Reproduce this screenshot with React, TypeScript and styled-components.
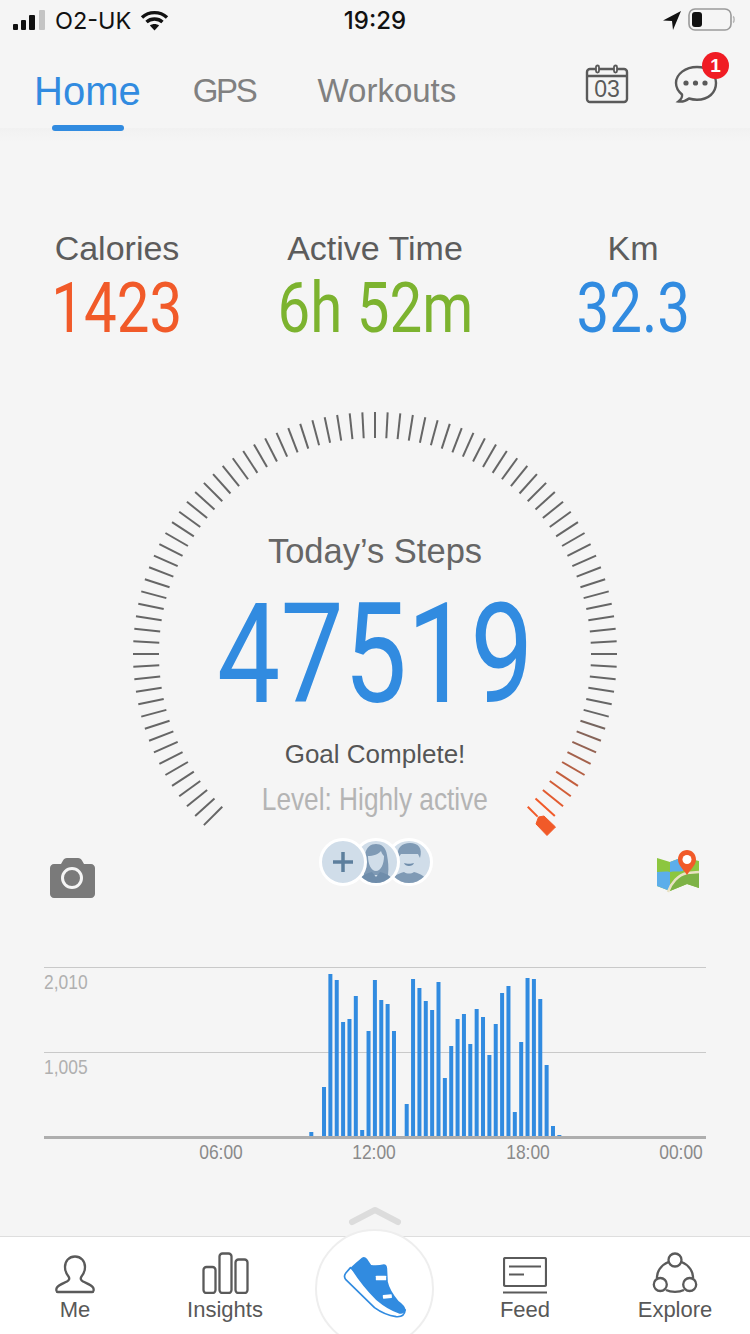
import React from "react";
import styled, { createGlobalStyle } from "styled-components";

const BLUE = "#318be0";
const ORANGE = "#f15a29";
const SANS = `"Liberation Sans", Arial, sans-serif`;
const CONDENSED = `Roboto, "Liberation Sans", Arial, sans-serif`;

const BAR_HEIGHTS = [
  5, 0, 50, 163, 157, 115, 118, 141, 7, 106, 157, 137, 133, 106, 0, 33, 158, 149, 136, 127,
  155, 59, 91, 118, 123, 93, 128, 120, 82, 113, 144, 151, 25, 95, 159, 158, 138, 72, 11, 2,
];

const TICKS = 91;

const mix = (t: number) => {
  const from = [102, 102, 102];
  const to = [241, 90, 41];
  const c = from.map((v, i) => Math.round(v + (to[i] - v) * t));
  return `rgb(${c.join(",")})`;
};

const GlobalStyle = createGlobalStyle`
  html, body {
    margin: 0;
    padding: 0;
    background: #f5f5f5;
    font-family: ${SANS};
  }
`;

const Page = styled.div`
  width: 750px;
  height: 1334px;
  display: flex;
  flex-direction: column;
  overflow: hidden;
  background: #f5f5f5;
`;

const StatusBar = styled.div`
  height: 40px;
  display: grid;
  grid-template-columns: 1fr auto 1fr;
  align-items: center;
  padding: 0 13px;
  color: #111;
  font-family: Inter, sans-serif;
`;

const StatusLeft = styled.div`
  display: flex;
  align-items: center;
  gap: 9px;
  font-size: 23.5px;
`;

const StatusRight = styled.div`
  display: flex;
  align-items: center;
  justify-content: flex-end;
  gap: 7px;
  padding-right: 2px;
`;

const Clock = styled.div`
  font-size: 24px;
  font-weight: 500;
`;

const Header = styled.header`
  height: 88px;
  display: flex;
  align-items: flex-start;
  justify-content: space-between;
  padding: 0 32px 0 34px;
  box-sizing: border-box;
  position: relative;
`;

const Tabs = styled.nav`
  display: flex;
  align-items: flex-start;
`;

const Tab = styled.div<{ $active?: boolean; $tracking?: string }>`
  position: relative;
  font-size: ${(p) => (p.$active ? "40px" : "33px")};
  line-height: 50px;
  margin-top: 26px;
  margin-right: ${(p) => (p.$active ? "52px" : "62px")};
  letter-spacing: ${(p) => p.$tracking ?? "0"};
  color: ${(p) => (p.$active ? BLUE : "#808080")};

  ${(p) =>
    p.$active &&
    `
    &::after {
      content: "";
      position: absolute;
      left: 18px;
      top: 59px;
      width: 72px;
      height: 6px;
      border-radius: 3px;
      background: ${BLUE};
    }
  `}
`;

const HeaderIcons = styled.div`
  display: flex;
  align-items: flex-start;
  gap: 45px;
  margin-top: 24px;
`;

const BubbleWrap = styled.div`
  position: relative;
  width: 44px;
  height: 40px;
`;

const Badge = styled.div`
  position: absolute;
  top: -12px;
  right: -11px;
  width: 27px;
  height: 27px;
  border-radius: 50%;
  background: #f01c24;
  color: #fff;
  font-size: 19px;
  font-weight: 700;
  display: flex;
  align-items: center;
  justify-content: center;
`;

const Main = styled.main`
  flex: 1;
  padding-top: 100px;
  background: linear-gradient(180deg, #f1f1f1 0, #f5f5f5 14px);
`;

const Metrics = styled.section`
  display: grid;
  grid-template-columns: repeat(3, 200px);
  column-gap: 58px;
  padding-left: 17px;
`;

const Metric = styled.div`
  display: flex;
  flex-direction: column;
  align-items: center;
`;

const MetricLabel = styled.div`
  font-size: 34px;
  line-height: 40px;
  color: #5c5c5c;
  white-space: nowrap;
`;

const MetricValue = styled.div<{ $color: string }>`
  margin-top: 5px;
  font-family: ${CONDENSED};
  font-weight: 400;
  font-size: 71px;
  line-height: 70px;
  color: ${(p) => p.$color};
  white-space: nowrap;
  transform: scaleX(0.82);
`;

const Gauge = styled.section`
  position: relative;
  width: 500px;
  height: 434px;
  margin: 61px auto 0;
  padding-top: 127px;
  box-sizing: border-box;
  display: flex;
  flex-direction: column;
  align-items: center;
`;

const GaugeDial = styled.svg`
  position: absolute;
  left: 0;
  top: 0;
`;

const GaugeTitle = styled.div`
  font-size: 34.5px;
  line-height: 40px;
  color: #666;
`;

const Steps = styled.div`
  margin-top: 24px;
  font-family: ${CONDENSED};
  font-weight: 400;
  font-size: 139px;
  line-height: 120px;
  color: ${BLUE};
  transform: scaleX(0.81);
`;

const Goal = styled.div`
  margin-top: 22px;
  font-size: 26px;
  line-height: 34px;
  color: #555;
`;

const Level = styled.div`
  margin-top: 11px;
  font-size: 32px;
  line-height: 34px;
  color: #b4b4b4;
  white-space: nowrap;
  transform: scaleX(0.82);
`;

const Actions = styled.section`
  height: 59px;
  display: grid;
  grid-template-columns: 1fr auto 1fr;
  align-items: start;
  padding: 0 49px 0 50px;
`;

const CameraSlot = styled.div`
  padding-top: 20px;
`;

const MapSlot = styled.div`
  padding-top: 10px;
  display: flex;
  justify-content: flex-end;
`;

const Friends = styled.div`
  display: flex;
`;

const Friend = styled.div<{ $layer: number }>`
  position: relative;
  z-index: ${(p) => p.$layer};
  width: 48px;
  height: 48px;
  box-sizing: border-box;
  border: 3.5px solid #fff;
  border-radius: 50%;
  background: #d0dde9;
  overflow: hidden;
  display: flex;
  align-items: center;
  justify-content: center;

  & + & {
    margin-left: -15px;
  }
`;

const Chart = styled.section`
  position: relative;
  margin: 70px 44px 0;
`;

const Band = styled.div`
  height: 85px;
  border-top: 1px solid #c9c9c9;
  padding-top: 2px;
  box-sizing: border-box;
  font-size: 21px;
  line-height: 24px;
  color: #b0b0b0;
`;

const BandLabel = styled.div`
  transform: scaleX(0.83);
  transform-origin: left center;
`;

const Baseline = styled.div`
  position: relative;
  z-index: 1;
  margin-top: -1px;
  height: 3px;
  background: #aeaeae;
`;

const Bars = styled.svg`
  position: absolute;
  left: 0;
  top: 0;
`;

const TimeAxis = styled.div`
  display: flex;
  gap: 93.3px;
  padding-left: 191px;
  margin-top: 1px;
`;

const TimeLabel = styled.div`
  width: 60px;
  text-align: center;
  font-size: 21px;
  line-height: 24px;
  color: #8a8a8a;
  transform: scaleX(0.83);
`;

const BottomNav = styled.nav`
  position: relative;
  height: 98px;
  box-sizing: border-box;
  border-top: 1px solid #dedede;
  background: #fff;
  display: grid;
  grid-template-columns: repeat(5, 150px);
  padding-top: 14px;
`;

const NavItem = styled.div`
  display: flex;
  flex-direction: column;
  align-items: center;
`;

const NavIcon = styled.div`
  height: 43px;
  display: flex;
  align-items: flex-end;
`;

const NavLabel = styled.div`
  font-size: 22px;
  line-height: 32px;
  color: #585858;
`;

const Chevron = styled.svg`
  position: absolute;
  left: 348px;
  top: -31px;
`;

const RunButton = styled.div`
  position: absolute;
  left: 315px;
  top: -8px;
  width: 119px;
  height: 119px;
  box-sizing: border-box;
  border-radius: 50%;
  border: 2px solid #eeeeee;
  background: #fff;
  display: flex;
  align-items: flex-start;
  justify-content: center;
  padding-top: 24px;
`;

const SignalIcon = () => (
  <svg width="33" height="21" viewBox="0 0 33 21">
    <rect x="0" y="14" width="5" height="6" rx="1" fill="#111" />
    <rect x="8" y="10" width="5" height="10" rx="1" fill="#111" />
    <rect x="16" y="5" width="6" height="15" rx="1" fill="#111" />
    <rect x="26" y="0" width="6" height="20" rx="1" fill="#c4c4c4" />
  </svg>
);

const WifiIcon = () => (
  <svg width="29" height="21" viewBox="0 0 29 21" fill="none" stroke="#111" strokeWidth="3.4">
    <path d="M2 7.5C9 1 20 1 27 7.5" />
    <path d="M6.5 12C11 8 18 8 22.5 12" />
    <path d="M14.5 20.5l-4.6-5c2.6-2 6.6-2 9.2 0z" fill="#111" stroke="none" />
  </svg>
);

const LocationIcon = () => (
  <svg width="18" height="19" viewBox="0 0 18 19">
    <path d="M18 0L0 9.5l9 .5 1 9z" fill="#111" />
  </svg>
);

const BatteryIcon = () => (
  <svg width="47" height="24" viewBox="0 0 47 24" fill="none">
    <rect x="1" y="1" width="42" height="21" rx="6" stroke="#9a9a9a" strokeWidth="1.6" />
    <rect x="4" y="4" width="10" height="15" rx="3" fill="#111" />
    <path d="M45 8.5c1.5.6 1.5 5.4 0 6" stroke="#b5b5b5" strokeWidth="1.5" />
  </svg>
);

const CalendarIcon = () => (
  <svg width="44" height="40" viewBox="0 0 44 40" fill="none" stroke="#5a5a5a" strokeWidth="2.4">
    <rect x="2" y="5" width="40" height="33" rx="3" />
    <path d="M2 12h40" />
    <rect x="11" y="1.5" width="3" height="7" rx="1.5" fill="#f5f5f5" strokeWidth="1.8" />
    <rect x="29" y="1.5" width="3" height="7" rx="1.5" fill="#f5f5f5" strokeWidth="1.8" />
    <text x="22" y="33" textAnchor="middle" fontFamily={SANS} fontSize="23" fill="#5a5a5a" stroke="none">
      03
    </text>
  </svg>
);

const BubbleIcon = () => (
  <svg width="44" height="40" viewBox="0 0 44 40" fill="none">
    <path
      d="M23 3C11.5 3 2 10 2 19c0 4.5 2.5 8.5 6 11.5.5 2.5-1 5-3.5 7 4.5.5 8-1 10.5-3 2.500.8 5 1.200 8 1.200 11.500 0 19-7 19-16.700C42 10 34.500 3 23 3z"
      stroke="#5a5a5a"
      strokeWidth="2.4"
    />
    <circle cx="12" cy="19" r="2.6" fill="#5a5a5a" />
    <circle cx="21.5" cy="19" r="2.6" fill="#5a5a5a" />
    <circle cx="31" cy="19" r="2.6" fill="#5a5a5a" />
  </svg>
);

const Dial = () => {
  const cx = 250;
  const cy = 250;
  const lines = Array.from({ length: TICKS }, (_, i) => {
    const deg = -225 + i * 3;
    const a = (deg * Math.PI) / 180;
    const last = i === TICKS - 1;
    const outer = last ? 230 : 242;
    const t = Math.max(0, (i - (TICKS - 11)) / 9);
    return (
      <line
        key={i}
        x1={cx + 216 * Math.cos(a)}
        y1={cy + 216 * Math.sin(a)}
        x2={cx + outer * Math.cos(a)}
        y2={cy + outer * Math.sin(a)}
        stroke={last ? ORANGE : mix(t)}
        strokeWidth="2"
      />
    );
  });
  return (
    <GaugeDial width="500" height="440" viewBox="0 0 500 440">
      {lines}
      <path d="M411 420l2.5-7 5.5-1 11.5 11-8.500 8.500z" fill={ORANGE} stroke={ORANGE} strokeWidth="1" strokeLinejoin="round" />
    </GaugeDial>
  );
};

const CameraIcon = () => (
  <svg width="45" height="40" viewBox="0 0 45 40">
    <path
      d="M4 6h7l2-3.5C13.800 1 15 0 17 0h11c2 0 3.200 1 4 2.500L34 6h7c2.200 0 4 1.800 4 4v26c0 2.200-1.800 4-4 4H4c-2.200 0-4-1.800-4-4V10c0-2.200 1.800-4 4-4z"
      fill="#7a7a7a"
    />
    <circle cx="22" cy="20" r="9.5" fill="#7a7a7a" stroke="#f5f5f5" strokeWidth="3" />
  </svg>
);

const MapIcon = () => (
  <svg width="45" height="46" viewBox="0 0 45 46">
    <path d="M1 10l13 4 13-5 16 4v27l-12-4-17 7-13-5z" fill="#8cc63f" />
    <path d="M14 14l13-5v14c-4 1-9 0-13 1z" fill="#5caeea" />
    <path d="M1 24c4 0 9-1 13 0v19L1 38z" fill="#5caeea" />
    <path d="M14 43c2-8 9-14 15-17l14-1v15l-12-4z" fill="#7db246" />
    <path d="M12 44c3-9 10-17 19-19l12-1" fill="none" stroke="#e9e2c4" strokeWidth="2.5" />
    <path d="M31 27c-4-6-9-10-9-15.5C22 6 26 2 31 2s9 4 9 9.5C40 17 35 21 31 27z" fill={ORANGE} />
    <circle cx="31" cy="11.5" r="4.5" fill="#fff" />
  </svg>
);

const WomanAvatar = () => (
  <svg width="42" height="42" viewBox="0 0 42 42">
    <path d="M9 34c-1-8 0-14 1-20C11 6 16 3 21 3s10 3 11 11c1 6 2 12 1 20z" fill="#7f9ab5" />
    <path d="M13 15c5 0 11-2 13-5 1 3 2 4 3 5 0 8-3 15-8 15s-8-7-8-15z" fill="#d0dde9" />
    <path d="M4 42c0-6 5-9 13-11l4 5 4-5c8 2 13 5 13 11z" fill="#6f8dab" />
  </svg>
);

const ManAvatar = () => (
  <svg width="42" height="42" viewBox="0 0 42 42">
    <path d="M10 17C8 7 14 2 22 2s13 5 10 15l-2-4H13z" fill="#7f9ab5" />
    <path d="M13 17c0 8 3 12 8 12s8-4 8-12c0-2-1-3-2-4H15c-1 1-2 2-2 4z" fill="#d0dde9" />
    <path d="M16 22c2 1 8 1 10 0-1 4-9 4-10 0z" fill="#6f8dab" />
    <path d="M3 42c0-6 6-9 13-11 3 2 7 2 10 0 7 2 13 5 13 11z" fill="#7f9ab5" />
  </svg>
);

const PlusIcon = () => (
  <svg width="22" height="22" viewBox="0 0 22 22">
    <path d="M11 1v20M1 11h20" stroke="#5d7f9d" strokeWidth="3.5" />
  </svg>
);

const StepBars = () => (
  <Bars width="662" height="172" viewBox="0 0 662 172">
    {BAR_HEIGHTS.map((h, i) => (
      <rect key={i} x={265.3 + i * 6.36} y={170 - h} width="4" height={h} fill={BLUE} />
    ))}
  </Bars>
);

const MeIcon = () => (
  <svg width="40" height="39" viewBox="0 0 40 39" fill="none" stroke="#5a5a5a" strokeWidth="2.3">
    <path d="M20 1.5c-6 0-10 4.5-10 10.5 0 4 1.5 7 3.5 9.5 1.5 2 .5 4-1.5 5-3.5 1.800-8 3-10 6-1 1.500-1 4.500 1 4.500h34c2 0 2-3 1-4.500-2-3-6.500-4.200-10-6-2-1-3-3-1.500-5 2-2.500 3.500-5.500 3.500-9.500 0-6-4-10.500-10-10.500z" />
  </svg>
);

const InsightsIcon = () => (
  <svg width="47" height="42" viewBox="0 0 47 42" fill="none" stroke="#5a5a5a" strokeWidth="2.3">
    <rect x="1.5" y="15" width="12" height="26" rx="3" />
    <rect x="17.5" y="1.5" width="12" height="39.5" rx="3" />
    <rect x="33.5" y="7.5" width="12" height="33.5" rx="3" />
  </svg>
);

const FeedIcon = () => (
  <svg width="44" height="37" viewBox="0 0 44 37" fill="none" stroke="#5a5a5a">
    <rect x="1" y="1" width="42" height="28" rx="1.5" strokeWidth="2.2" />
    <path d="M6 9.5h32M6 17.5h15" strokeWidth="2" />
    <path d="M0 35.5h44" strokeWidth="2.2" />
  </svg>
);

const ExploreIcon = () => (
  <svg width="46" height="42" viewBox="0 0 46 42" fill="none" stroke="#5a5a5a" strokeWidth="2.3">
    <path d="M16.5 10C9 13 4.5 20 5 26M41 26c.5-6-4-13-11.500-16M14 38c5 2.500 13 2.500 18 0" />
    <circle cx="23" cy="8" r="6.5" />
    <circle cx="8.3" cy="32.5" r="6.5" />
    <circle cx="37.7" cy="32.5" r="6.5" />
  </svg>
);

const ShoeIcon = () => (
  <svg width="67" height="65" viewBox="60 160 200 195">
    <path
      d="M88 198L74 214Q66 224 74 234L160 318Q190 340 225 345Q250 347 252 325Z"
      fill="#fff"
      stroke={BLUE}
      strokeWidth="5"
      strokeLinejoin="round"
    />
    <path
      d="M88 198Q105 182 122 168Q130 162 138 172L150 190Q170 192 188 188Q197 188 198 200L200 240Q205 265 232 298Q252 312 253 325Q250 338 235 336Q200 325 165 295Q120 250 88 198Z"
      fill={BLUE}
    />
    <rect x="164" y="222" width="31" height="14" rx="2" fill="#fff" />
    <rect x="185" y="279" width="27" height="11" rx="2" fill="#fff" transform="rotate(-6 198 284)" />
  </svg>
);

const App = () => {
  return (
    <Page>
      <GlobalStyle />
      <StatusBar>
        <StatusLeft>
          <SignalIcon />
          <span>O2-UK</span>
          <WifiIcon />
        </StatusLeft>
        <Clock>19:29</Clock>
        <StatusRight>
          <LocationIcon />
          <BatteryIcon />
        </StatusRight>
      </StatusBar>

      <Header>
        <Tabs>
          <Tab $active>Home</Tab>
          <Tab $tracking="-2.3px">GPS</Tab>
          <Tab>Workouts</Tab>
        </Tabs>
        <HeaderIcons>
          <CalendarIcon />
          <BubbleWrap>
            <BubbleIcon />
            <Badge>1</Badge>
          </BubbleWrap>
        </HeaderIcons>
      </Header>

      <Main>
        <Metrics>
          <Metric>
            <MetricLabel>Calories</MetricLabel>
            <MetricValue $color={ORANGE}>1423</MetricValue>
          </Metric>
          <Metric>
            <MetricLabel>Active Time</MetricLabel>
            <MetricValue $color="#7cb32f">6h 52m</MetricValue>
          </Metric>
          <Metric>
            <MetricLabel>Km</MetricLabel>
            <MetricValue $color={BLUE}>32.3</MetricValue>
          </Metric>
        </Metrics>

        <Gauge>
          <Dial />
          <GaugeTitle>Today’s Steps</GaugeTitle>
          <Steps>47519</Steps>
          <Goal>Goal Complete!</Goal>
          <Level>Level: Highly active</Level>
        </Gauge>

        <Actions>
          <CameraSlot>
            <CameraIcon />
          </CameraSlot>
          <Friends>
            <Friend $layer={3}>
              <PlusIcon />
            </Friend>
            <Friend $layer={2}>
              <WomanAvatar />
            </Friend>
            <Friend $layer={1}>
              <ManAvatar />
            </Friend>
          </Friends>
          <MapSlot>
            <MapIcon />
          </MapSlot>
        </Actions>

        <Chart>
          <Band>
            <BandLabel>2,010</BandLabel>
          </Band>
          <Band>
            <BandLabel>1,005</BandLabel>
          </Band>
          <Baseline />
          <StepBars />
        </Chart>
        <TimeAxis>
          <TimeLabel>06:00</TimeLabel>
          <TimeLabel>12:00</TimeLabel>
          <TimeLabel>18:00</TimeLabel>
          <TimeLabel>00:00</TimeLabel>
        </TimeAxis>
      </Main>

      <BottomNav>
        <NavItem>
          <NavIcon>
            <MeIcon />
          </NavIcon>
          <NavLabel>Me</NavLabel>
        </NavItem>
        <NavItem>
          <NavIcon>
            <InsightsIcon />
          </NavIcon>
          <NavLabel>Insights</NavLabel>
        </NavItem>
        <NavItem />
        <NavItem>
          <NavIcon>
            <FeedIcon />
          </NavIcon>
          <NavLabel>Feed</NavLabel>
        </NavItem>
        <NavItem>
          <NavIcon>
            <ExploreIcon />
          </NavIcon>
          <NavLabel>Explore</NavLabel>
        </NavItem>
        <Chevron width="54" height="22" viewBox="0 0 54 22" fill="none">
          <path d="M4 16L27 4l23 12" stroke="#dcdcdc" strokeWidth="6" strokeLinecap="round" strokeLinejoin="round" />
        </Chevron>
        <RunButton>
          <ShoeIcon />
        </RunButton>
      </BottomNav>
    </Page>
  );
};

export default App;
